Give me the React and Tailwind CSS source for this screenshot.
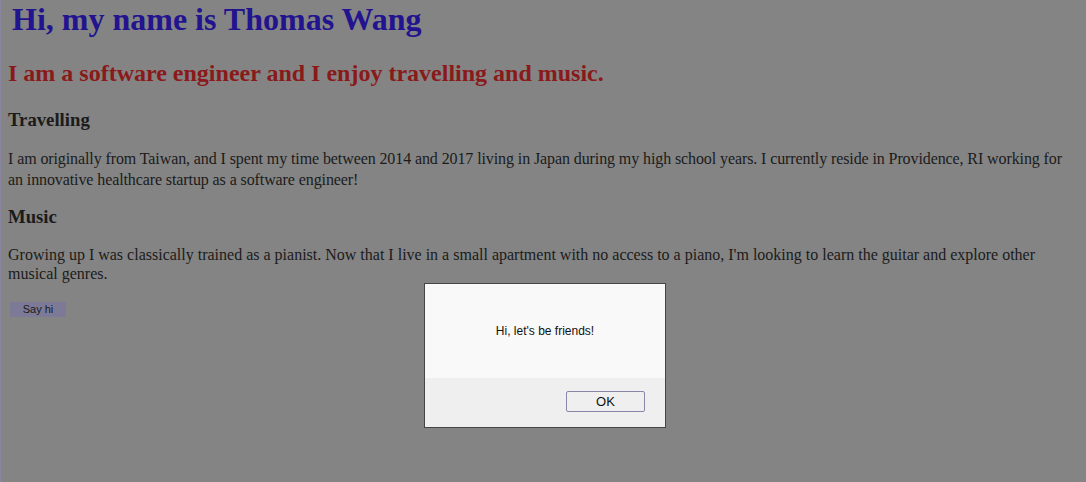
export default function App() {
  return (
    <div className="relative min-h-[482px] w-full bg-[#848484] px-2 pt-px pb-4 font-['Liberation_Serif',serif] text-[#1b1b1b] shadow-[inset_1px_0_0_#8a86a0]">
      <h1 className="ml-1 text-[32px] font-bold leading-[36px] text-[#22138f]">Hi, my name is Thomas Wang</h1>
      <h2 className="mt-[23px] text-[24px] font-bold leading-[27px] text-[#8a1a1a]">I am a software engineer and I enjoy travelling and music.</h2>
      <h3 className="mt-[22px] text-[18.72px] font-bold leading-[22px]">Travelling</h3>
      <p className="mt-[17px] text-[16px] leading-[21px] tracking-[-0.1px]">
        I am originally from Taiwan, and I spent my time between 2014 and 2017 living in Japan during my high school years. I currently reside in Providence, RI working for an innovative healthcare startup as a software engineer!
      </p>
      <h3 className="mt-[16px] text-[18.72px] font-bold leading-[22px]">Music</h3>
      <p className="mt-[17px] text-[16px] leading-[19px]">
        Growing up I was classically trained as a pianist. Now that I live in a small apartment with no access to a piano, I'm looking to learn the guitar and explore other musical genres.
      </p>
      <button className="ml-[2px] mt-[19px] flex h-[15px] w-[56px] items-center justify-center bg-[#7c7a96] font-['Liberation_Sans',sans-serif] text-[11px] leading-none text-[#1a1a1a]">
        Say hi
      </button>

      <div className="absolute left-[424px] top-[283px] flex h-[145px] w-[242px] flex-col border border-[#454545] bg-[#f9f9f9] font-['Liberation_Sans',sans-serif]">
        <div className="flex h-[94px] items-center justify-center text-[12px] text-[#111]">
          Hi, let's be friends!
        </div>
        <div className="flex flex-1 items-start justify-end bg-[#efefef] pr-[20px] pt-[13px]">
          <div className="flex h-[21px] w-[79px] items-center justify-center rounded-[2px] border border-[#8a86a8] bg-[#efefef] text-[13px] text-[#111]">
            OK
          </div>
        </div>
      </div>
    </div>
  );
}
